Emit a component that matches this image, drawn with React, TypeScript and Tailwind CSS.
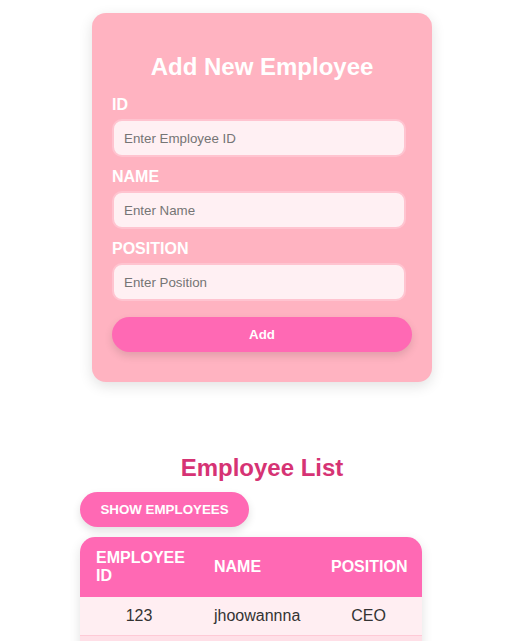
import { useState } from "react";

type Employee = { id: string; name: string; position: string };

export default function App() {
  const [employees] = useState<Employee[]>([
    { id: "123", name: "jhoowannna", position: "CEO" },
  ]);

  const fields = [
    { label: "ID", placeholder: "Enter Employee ID" },
    { label: "NAME", placeholder: "Enter Name" },
    { label: "POSITION", placeholder: "Enter Position" },
  ];

  return (
    <div className="min-h-screen bg-white font-['Liberation_Sans',Arial,sans-serif] pt-[13px] pb-10">
      {/* Form card */}
      <div className="ml-[92px] w-[340px] rounded-[14px] bg-[#ffb3c1] px-5 pt-10 pb-[30px] shadow-[0_4px_14px_rgba(0,0,0,0.12)]">
        <h2 className="mb-[15px] text-center text-[24px] font-bold leading-[28px] text-white">
          Add New Employee
        </h2>
        {fields.map((f) => (
          <div key={f.label} className="flex flex-col">
            <label className="mb-[5px] text-[16px] font-bold leading-[18px] text-white">
              {f.label}
            </label>
            <input
              placeholder={f.placeholder}
              className="mb-[11px] h-[38px] w-[294px] rounded-[10px] border-2 border-[#ffc4d0] bg-[#fff0f3] px-[10px] text-[13.33px] text-[#333] outline-none placeholder:text-[#757575]"
            />
          </div>
        ))}
        <button className="mt-[5px] h-[35px] w-full rounded-full bg-[#ff69b4] text-[13.33px] font-bold text-white shadow-[0_4px_8px_rgba(0,0,0,0.12)]">
          Add
        </button>
      </div>

      {/* Employee list */}
      <div className="ml-[80px] mt-[72px] flex w-[364px] flex-col">
        <h2 className="text-center text-[24px] font-bold leading-[28px] text-[#d63374]">
          Employee List
        </h2>
        <button className="mt-[10px] h-[35px] w-[169px] rounded-full bg-[#ff69b4] text-[13.33px] font-bold uppercase text-white shadow-[0_4px_8px_rgba(0,0,0,0.12)]">
          Show Employees
        </button>
        <div className="mt-[10px] w-[342px] overflow-hidden rounded-[15px] shadow-[0_4px_12px_rgba(0,0,0,0.12)]">
          <table className="w-full table-fixed border-collapse">
            <thead>
              <tr className="bg-[#ff69b4] text-white">
                <th className="w-[118px] px-4 py-3 text-left align-middle text-[16px] font-bold leading-[18px]">
                  EMPLOYEE ID
                </th>
                <th className="w-[117px] px-4 py-3 text-left align-middle text-[16px] font-bold leading-[18px]">
                  NAME
                </th>
                <th className="w-[107px] px-4 py-3 text-left align-middle text-[16px] font-bold leading-[18px]">
                  POSITION
                </th>
              </tr>
            </thead>
            <tbody>
              {employees.map((e) => (
                <tr key={e.id} className="border-b border-[#ffc9d6] bg-[#ffeef2] text-[#333]">
                  <td className="px-4 py-[10px] text-center text-[16px] leading-[18px]">{e.id}</td>
                  <td className="px-4 py-[10px] text-center text-[16px] leading-[18px]">{e.name}</td>
                  <td className="px-4 py-[10px] text-center text-[16px] leading-[18px]">{e.position}</td>
                </tr>
              ))}
              <tr className="bg-[#ffdfe7]">
                <td className="px-4 py-[10px] leading-[18px]">&nbsp;</td>
                <td className="px-4 py-[10px] leading-[18px]">&nbsp;</td>
                <td className="px-4 py-[10px] leading-[18px]">&nbsp;</td>
              </tr>
            </tbody>
          </table>
        </div>
      </div>
    </div>
  );
}
